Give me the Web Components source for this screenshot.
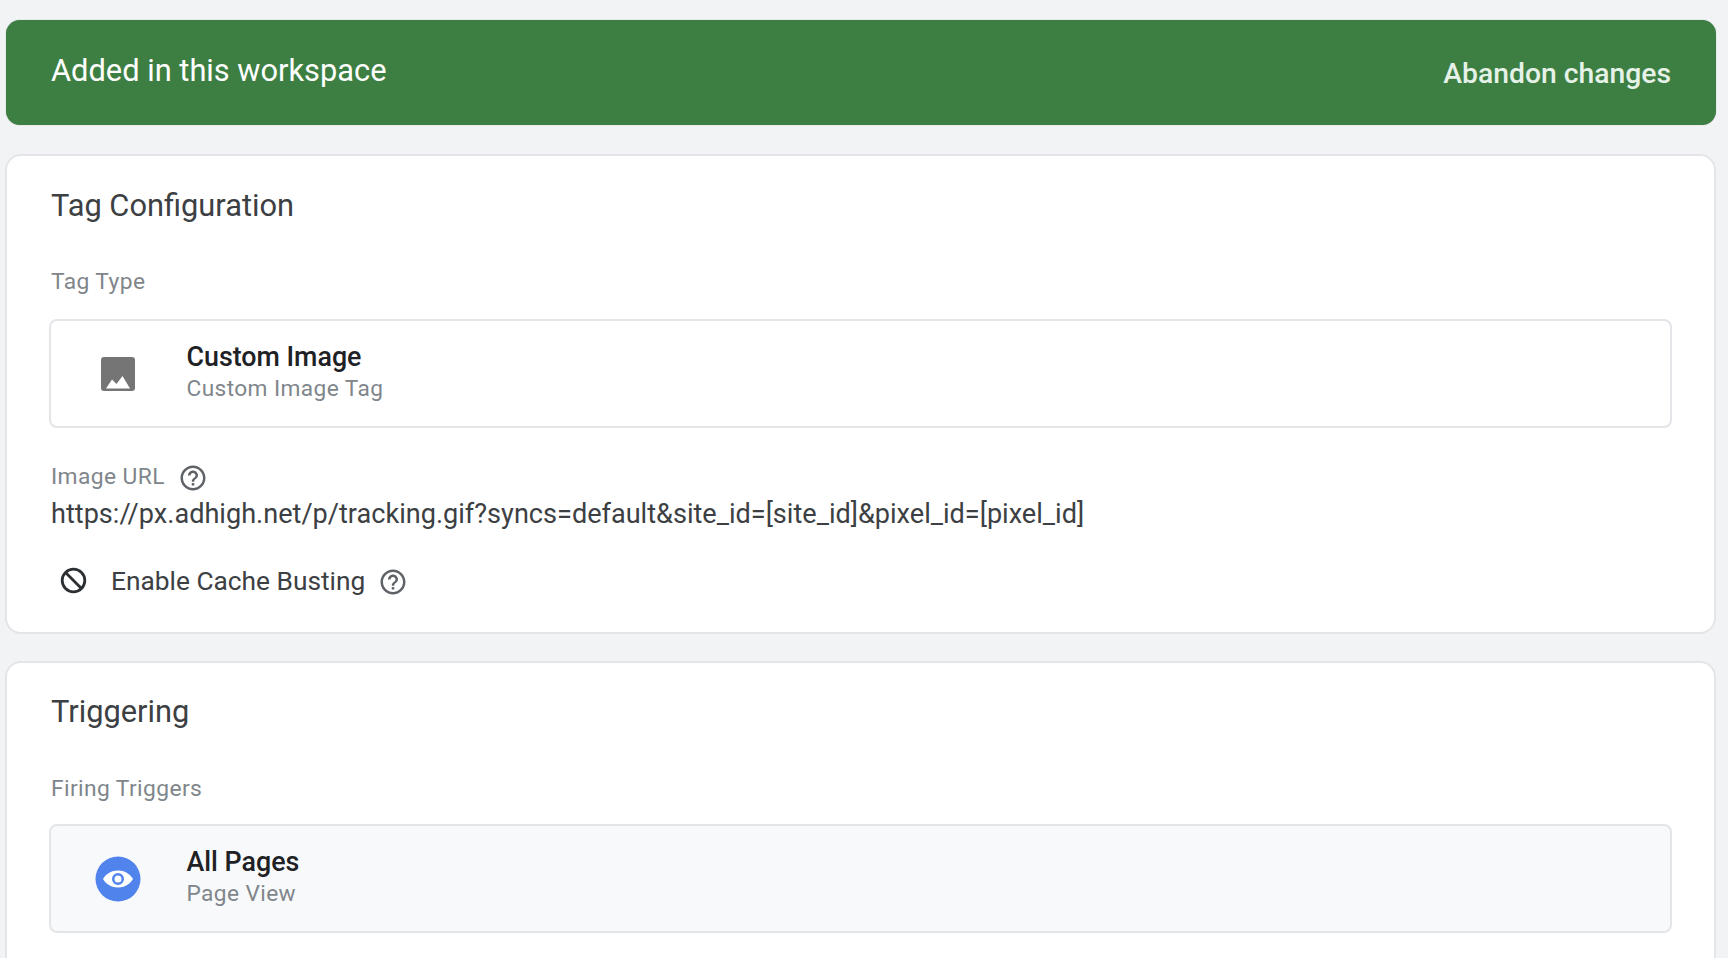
<!DOCTYPE html>
<html><head><meta charset="utf-8"><style>
html,body{margin:0;height:958px;overflow:hidden;background:#f1f3f4}
body{font-family:Roboto,sans-serif}
</style></head><body>
<tag-page>
<status-banner><span>Added in this workspace</span><span slot="action">Abandon changes</span></status-banner>
<config-card heading="Tag Configuration" style="--h:480px;--top:33px">
  <field-label style="--lt:46px;--lb:24px">Tag Type</field-label>
  <pick-row title-text="Custom Image" sub="Custom Image Tag" icon="image"></pick-row>
  <url-field></url-field>
  <cache-row></cache-row>
</config-card>
<config-card heading="Triggering" style="--h:320px;--top:32px">
  <field-label style="--lt:47px;--lb:22px">Firing Triggers</field-label>
  <pick-row title-text="All Pages" sub="Page View" icon="eye" tint></pick-row>
</config-card>
</tag-page>
<script>
const help='<svg width="30" height="30" viewBox="0 0 24 24" fill="#5f6368"><path d="M11 18h2v-2h-2v2zm1-16C6.48 2 2 6.48 2 12s4.48 10 10 10 10-4.48 10-10S17.52 2 12 2zm0 18c-4.41 0-8-3.59-8-8s3.59-8 8-8 8 3.59 8 8-3.59 8-8 8zm0-14c-2.21 0-4 1.79-4 4h2c0-1.1.9-2 2-2s2 .9 2 2c0 2-3 1.75-3 5h2c0-2.25 3-2.5 3-5 0-2.21-1.79-4-4-4z"/></svg>';
class El extends HTMLElement{
  render(html){this.attachShadow({mode:'open'}).innerHTML=html}
}
customElements.define('tag-page',class extends El{connectedCallback(){this.render(`<style>:host{display:flex;flex-direction:column;gap:27px;padding:20px 12px 0 5px;height:958px;box-sizing:border-box;overflow:hidden}</style><slot></slot>`)}});
customElements.define('status-banner',class extends El{connectedCallback(){this.render(`<style>
:host{display:flex;flex:none;justify-content:space-between;box-sizing:border-box;height:105px;margin:0 0 2px 1px;background:#3d7f42;border-radius:14px;color:#fff;padding:0 45px 0 45px;box-shadow:0 0 1px rgba(60,64,67,.5)}
.t{font-size:30.8px;line-height:36px;margin-top:33px}
.a{font-size:28.3px;font-weight:500;line-height:32px;margin-top:38px;color:#e6f2e8}
</style><div class="t"><slot></slot></div><div class="a"><slot name="action"></slot></div>`)}});
customElements.define('config-card',class extends El{connectedCallback(){this.render(`<style>
:host{display:block;flex:none;box-sizing:border-box;height:var(--h);background:#fff;border-radius:16px;border:2px solid #e3e5e8;padding:var(--top) 42px 0 42px;color:#202124}
h2{margin:0;font-size:30.8px;font-weight:400;line-height:34px;color:#3c4043;padding-left:2px}
</style><h2>${this.getAttribute('heading')}</h2><slot></slot>`)}});
customElements.define('field-label',class extends El{connectedCallback(){this.render(`<style>:host{display:block;font-size:22.8px;line-height:26px;letter-spacing:.4px;color:#80868b;margin-top:var(--lt);margin-bottom:var(--lb);padding-left:2px}</style><slot></slot>`)}});
customElements.define('pick-row',class extends El{connectedCallback(){
 const eye=this.getAttribute('icon')==='eye';
 const ic=eye?`<svg width="46" height="46" viewBox="0 0 46 46"><circle cx="23" cy="23" r="22.5" fill="#5083ec"/><path fill="#fff" fill-rule="evenodd" d="M23 14.5C15 14.5 9.8 19.5 8 23c1.8 3.5 7 8.5 15 8.5S36.2 26.5 38 23c-1.8-3.5-7-8.5-15-8.5zm0 14.5a6 6 0 1 1 0-12 6 6 0 0 1 0 12zm0-9.5a3.5 3.5 0 1 0 0 7 3.5 3.5 0 0 0 0-7z"/></svg>`
 :`<svg width="46" height="46" viewBox="0 0 46 46"><rect x="6" y="6" width="34" height="34" rx="3" fill="#757575"/><path fill="#fff" d="M11 37.5l6-9 4.500 4.500 6-8 7.500 12.500z"/></svg>`;
 this.render(`<style>
:host{display:flex;align-items:center;box-sizing:border-box;height:109px;border:2px solid #e3e5e8;border-radius:8px;background:${this.hasAttribute('tint')?'#f8f9fa':'#fff'};padding-left:44px}
.ic{width:46px;height:46px;flex:none;display:flex}
.tx{margin-left:45.5px;margin-top:-3px}
.a{font-size:26.8px;font-weight:500;line-height:32px;color:#202124}
.b{font-size:22.7px;line-height:31px;letter-spacing:.4px;color:#80868b}
</style><div class="ic">${ic}</div><div class="tx"><div class="a">${this.getAttribute('title-text')}</div><div class="b">${this.getAttribute('sub')}</div></div>`)}});
customElements.define('url-field',class extends El{connectedCallback(){this.render(`<style>
:host{display:block;margin-top:36px;padding-left:2px}
.l{display:flex;align-items:center;gap:13px;font-size:22.8px;line-height:26px;letter-spacing:.4px;color:#80868b}
.v{font-size:27.1px;line-height:34px;margin-top:7px;color:#3c4043;white-space:nowrap}
svg{display:block;flex:none;margin:-2px 0 -2px 0;position:relative;top:1px}
</style><div class="l"><span>Image URL</span>${help}</div><div class="v">https://px.adhigh.net/p/tracking.gif?syncs=default&amp;site_id=[site_id]&amp;pixel_id=[pixel_id]</div>`)}});
customElements.define('cache-row',class extends El{connectedCallback(){this.render(`<style>
:host{display:flex;align-items:center;margin-top:33px;padding-left:10px;font-size:26.3px;line-height:34px;color:#3c4043}
svg{display:block;flex:none}
.k{margin-right:23px;margin-top:-2px}
.h{margin-left:13px;margin-top:2px}
</style><svg class="k" width="29" height="29" viewBox="0 0 29 29" fill="none" stroke="#2d3033" stroke-width="2.8"><circle cx="14.500" cy="14.500" r="11.300"/><path d="M6.800 6.800l15.400 15.400"/></svg><span>Enable Cache Busting</span><span class="h">${help}</span>`)}});
</script>
</body></html>
